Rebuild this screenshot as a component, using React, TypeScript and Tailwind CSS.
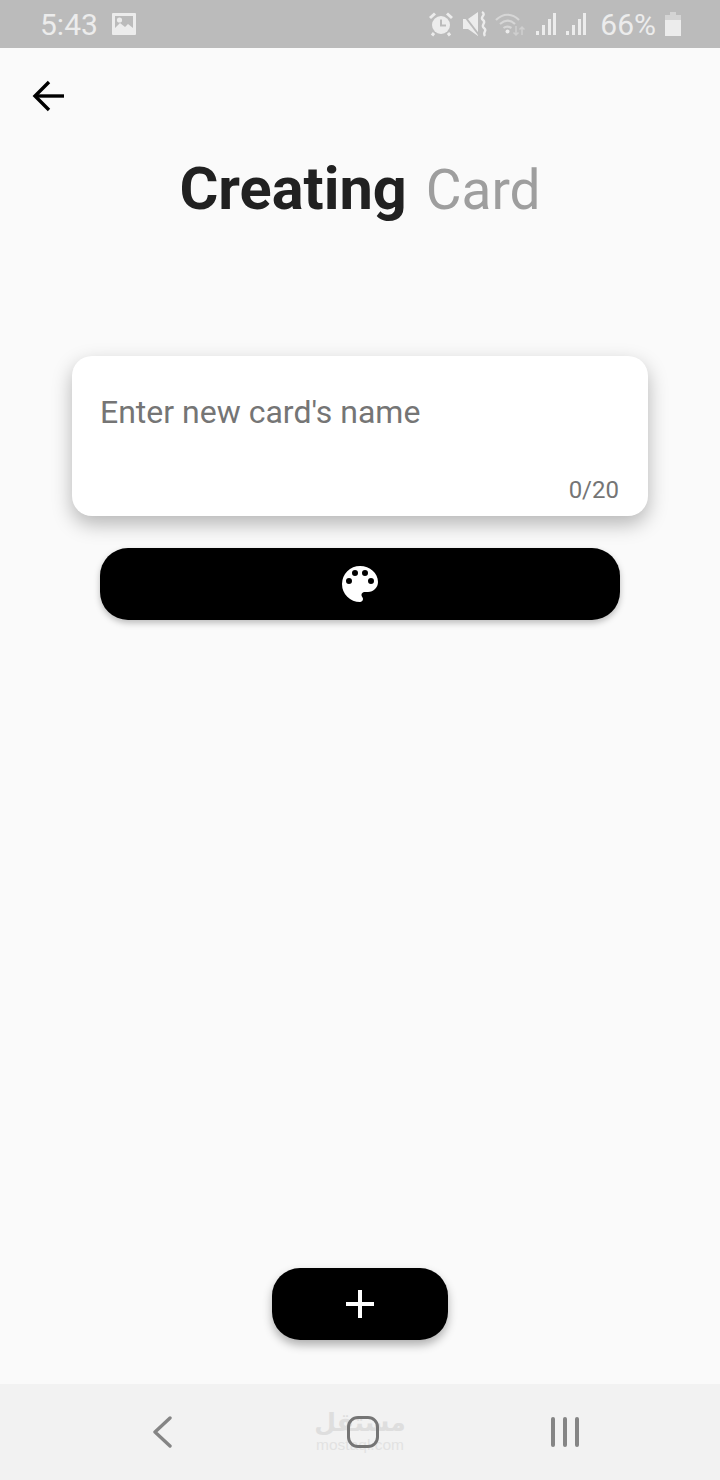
import React from "react";

const roboto = "font-['Roboto',sans-serif]";

function StatusLeft() {
  return (
    <div className="flex items-center">
      <span className={`${roboto} text-[30px] leading-none text-[#ececec] ml-[40px] mt-[2px] w-[72px]`}>5:43</span>
      <svg width="24" height="22" viewBox="0 0 24 22">
        <path fillRule="evenodd" fill="#ececec" d="M1 0h22a1 1 0 0 1 1 1v20a1 1 0 0 1-1 1H1a1 1 0 0 1-1-1V1a1 1 0 0 1 1-1zM3 3v12l5-5 5 4 3-3 5 4V3z" />
        <circle cx="7.500" cy="7" r="2.600" fill="#ececec" />
      </svg>
    </div>
  );
}

function Signal({ className }: { className: string }) {
  return (
    <svg width="22" height="26" viewBox="0 0 22 26" className={className} fill="#ececec">
      <rect x="1" y="20" width="3" height="4" />
      <rect x="7" y="14" width="3" height="10" />
      <rect x="13" y="8" width="3" height="16" />
      <rect x="18" y="2" width="3" height="22" />
    </svg>
  );
}

function StatusRight() {
  return (
    <div className="flex items-center mr-[39px]">
      <svg width="26" height="26" viewBox="0 0 26 26" fill="none">
        <circle cx="13" cy="14" r="9" fill="#ececec" />
        <path d="M13 8.500V14.500H18" stroke="#bbbbbb" strokeWidth="2" />
        <path d="M2 7 7 2.500M24 7 19 2.500M6 22l-2 2.500M20 22l2 2.500" stroke="#ececec" strokeWidth="3" />
      </svg>
      <svg width="26" height="26" viewBox="0 0 26 26" className="ml-[8px]" fill="none">
        <path d="M1 8h5l10-7v24L6 18H1z" fill="#ececec" />
        <path d="M1 3 17 24" stroke="#bbbbbb" strokeWidth="2" />
        <path d="M20 1c5 3-3 5 1 8s-3 5 1 8-2 4 1 8" stroke="#ececec" strokeWidth="2.400" />
      </svg>
      <svg width="30" height="26" viewBox="0 0 30 26" className="ml-[7px]" fill="none">
        <path d="M1 9c7-7 16-7 23 0M5 13c5-4.500 10-4.500 15 0M8.500 17c2.500-2 5-2 8 0" stroke="#d6d6d6" strokeWidth="2.200" />
        <circle cx="12.500" cy="20.500" r="2" fill="#ececec" />
        <path d="M21 15v9m-2.500-2.500L21 24l2.500-2.500M27 24v-8m-2.500 2.500L27 16l2.500 2.500" stroke="#cfcfcf" strokeWidth="1.500" />
      </svg>
      <Signal className="ml-[10px]" />
      <Signal className="ml-[8px]" />
      <span className={`${roboto} text-[30px] leading-none text-[#ececec] ml-[13px] mt-[2px]`}>66%</span>
      <svg width="16" height="24" viewBox="0 0 16 24" className="ml-[9px]">
        <path d="M5 0h6v3H5z" fill="#d4d4d4" />
        <path d="M0 3h16v5H0z" fill="#d4d4d4" />
        <path d="M0 8h16v16H0z" fill="#ececec" />
      </svg>
    </div>
  );
}

export default function App() {
  return (
    <div className="w-[720px] h-[1480px] flex flex-col bg-[#fafafa] overflow-hidden">
      <div className="h-[48px] shrink-0 bg-[#bbbbbb] flex items-center justify-between">
        <StatusLeft />
        <StatusRight />
      </div>

      <div className="flex-1 flex flex-col items-center relative">
        <div className="self-start h-[96px] pl-[32px] flex items-center">
          <svg width="32" height="32" viewBox="0 0 32 32" fill="none" stroke="#000000" strokeWidth="3.400">
            <path d="M32 16H3" />
            <path d="M17 2 3 16l14 14" />
          </svg>
        </div>

        <h1 className={`${roboto} text-[59.500px] leading-[66px] h-[66px] mt-[12px] flex items-baseline gap-[19px]`}>
          <span className="font-bold text-[#212121]">Creating</span>
          <span className="font-normal text-[55px] text-[#9e9e9e]">Card</span>
        </h1>

        <div className="mt-[134px] w-[576px] h-[160px] rounded-[20px] bg-white shadow-[0_8px_20px_rgba(0,0,0,0.28)] relative">
          <p className={`${roboto} text-[32px] leading-[38px] text-[#757575] pl-[28px] pt-[37px]`}>Enter new card's name</p>
          <span className={`absolute right-[29px] bottom-[12px] ${roboto} text-[24px] leading-[28px] text-[#757575]`}>0/20</span>
        </div>

        <button className="mt-[32px] w-[520px] h-[72px] rounded-[28px] bg-black flex items-center justify-center shadow-[0_3px_6px_rgba(0,0,0,0.25)]">
          <svg width="48" height="48" viewBox="0 0 24 24" fill="#ffffff">
            <path d="M12 3a9 9 0 0 0 0 18c.83 0 1.500-.67 1.500-1.500 0-.39-.15-.74-.39-1.010-.23-.26-.38-.61-.38-.99 0-.83.67-1.500 1.500-1.500H16c2.760 0 5-2.240 5-5 0-4.420-4.030-8-9-8zm-5.500 9a1.500 1.500 0 1 1 0-3 1.500 1.500 0 0 1 0 3zm3-4a1.500 1.500 0 1 1 0-3 1.500 1.500 0 0 1 0 3zm5 0a1.500 1.500 0 1 1 0-3 1.500 1.500 0 0 1 0 3zm3 4a1.500 1.500 0 1 1 0-3 1.500 1.500 0 0 1 0 3z" />
          </svg>
        </button>

        <div className="flex-1" />

        <button className="mb-[44px] w-[176px] h-[72px] rounded-[28px] bg-black flex items-center justify-center shadow-[0_5px_10px_rgba(0,0,0,0.3)]">
          <svg width="28" height="28" viewBox="0 0 28 28" fill="#ffffff">
            <path d="M12 0h4v12h12v4H16v12h-4V16H0v-4h12z" />
          </svg>
        </button>
      </div>

      <div className="h-[96px] shrink-0 bg-[#f2f2f2] flex items-center relative pl-[152px]">
        <svg width="20" height="32" viewBox="0 0 20 32" fill="none" stroke="#858585" strokeWidth="3.400" strokeLinecap="round" strokeLinejoin="round">
          <path d="M18 2 3 16l15 14" />
        </svg>
        <div className="absolute left-[316px] top-[24px] w-[88px] flex flex-col items-center text-[#dedede]">
          <span className="font-['DejaVu_Sans',sans-serif] font-bold text-[25px] leading-[30px]">مستقل</span>
          <span className="font-['Liberation_Sans',sans-serif] text-[15.500px] leading-[14px] text-[#e2e2e2]">mostaql.com</span>
        </div>
        <div className="relative ml-[175px] w-[32px] h-[32px] rounded-[11px] border-[3.500px] border-[#757575]" />
        <div className="flex gap-[8px] ml-[172px]">
          <div className="w-[4px] h-[30px] rounded-full bg-[#858585]" />
          <div className="w-[4px] h-[30px] rounded-full bg-[#858585]" />
          <div className="w-[4px] h-[30px] rounded-full bg-[#858585]" />
        </div>
      </div>
    </div>
  );
}
